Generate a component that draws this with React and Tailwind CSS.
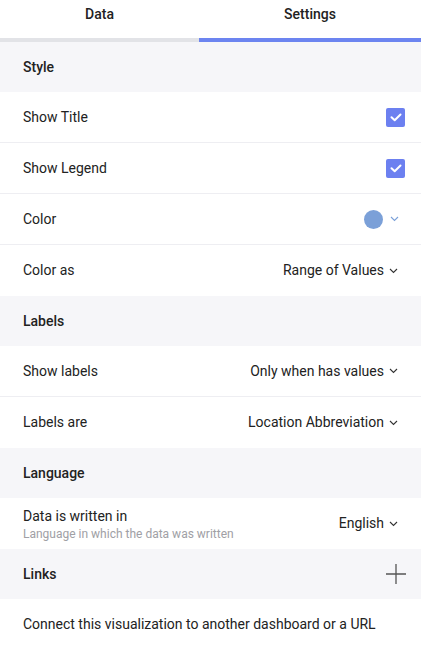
const Chevron = ({ className = 'text-[#333]' }) => (
  <svg width="9" height="6" viewBox="0 0 9 6" className={className} fill="none">
    <path d="M1 1l3.5 3.5L8 1" stroke="currentColor" strokeWidth="1.1" />
  </svg>
);

const Check = () => (
  <div className="flex h-[19px] w-[19px] items-center justify-center rounded-[2px] bg-[#6c80f0]">
    <svg width="12" height="9" viewBox="0 0 12 9" fill="none">
      <path d="M1.5 4.2l3.2 3L10.5 1.5" stroke="white" strokeWidth="2" strokeLinecap="round" strokeLinejoin="round" />
    </svg>
  </div>
);

const SectionHeader = ({ title, children }) => (
  <div className="flex h-[50px] items-center justify-between bg-[#f6f6f9] pl-[23px] pr-[15px]">
    <span className="text-[14px] font-medium text-[#222]">{title}</span>
    {children}
  </div>
);

const Row = ({ label, sub, children, last }) => (
  <div className={`flex h-[51px] items-center justify-between pl-[23px] pr-[15px] ${last ? '' : 'border-b border-[#eeeef2]'}`}>
    <div className="flex flex-col">
      <span className="text-[14px] text-[#222]">{label}</span>
      {sub && <span className="text-[12px] leading-[14px] text-[#a0a0a5]">{sub}</span>}
    </div>
    {children}
  </div>
);

const Select = ({ value }) => (
  <div className="flex items-center gap-[5px] pr-[8px] text-[14px] text-[#222]">
    <span>{value}</span>
    <Chevron />
  </div>
);

export default function App() {
  return (
    <div className="h-[648px] w-[421px] overflow-hidden bg-white font-['Roboto',sans-serif]">
      {/* tabs */}
      <div className="flex h-[38px]">
        <div className="flex w-[199px] items-start justify-center pt-[4px] text-[14px] font-medium text-[#222]">Data</div>
        <div className="flex flex-1 items-start justify-center pt-[4px] text-[14px] font-medium text-[#222]">Settings</div>
      </div>
      <div className="flex h-[4px]">
        <div className="w-[199px] bg-[#e2e3e7]" />
        <div className="flex-1 bg-[#6c84f0]" />
      </div>

      <SectionHeader title="Style" />
      <Row label="Show Title">
        <div className="pr-[1px]"><Check /></div>
      </Row>
      <Row label="Show Legend">
        <div className="pr-[1px]"><Check /></div>
      </Row>
      <Row label="Color">
        <div className="flex items-center gap-[7px] pr-[7px]">
          <div className="h-[19px] w-[19px] rounded-full bg-[#7ba0d8]" />
          <Chevron className="text-[#7ba0d8]" />
        </div>
      </Row>
      <Row label="Color as" last>
        <Select value="Range of Values" />
      </Row>

      <SectionHeader title="Labels" />
      <Row label="Show labels">
        <Select value="Only when has values" />
      </Row>
      <Row label="Labels are" last>
        <Select value="Location Abbreviation" />
      </Row>

      <SectionHeader title="Language" />
      <Row label="Data is written in" sub="Language in which the data was written" last>
        <Select value="English" />
      </Row>

      <SectionHeader title="Links">
        <svg width="20" height="20" viewBox="0 0 20 20" className="text-[#555]">
          <path d="M10 0v20M0 10h20" stroke="currentColor" strokeWidth="1.3" />
        </svg>
      </SectionHeader>
      <div className="flex h-[50px] items-center pl-[23px] text-[14px] text-[#222]">
        Connect this visualization to another dashboard or a URL
      </div>
    </div>
  );
}
